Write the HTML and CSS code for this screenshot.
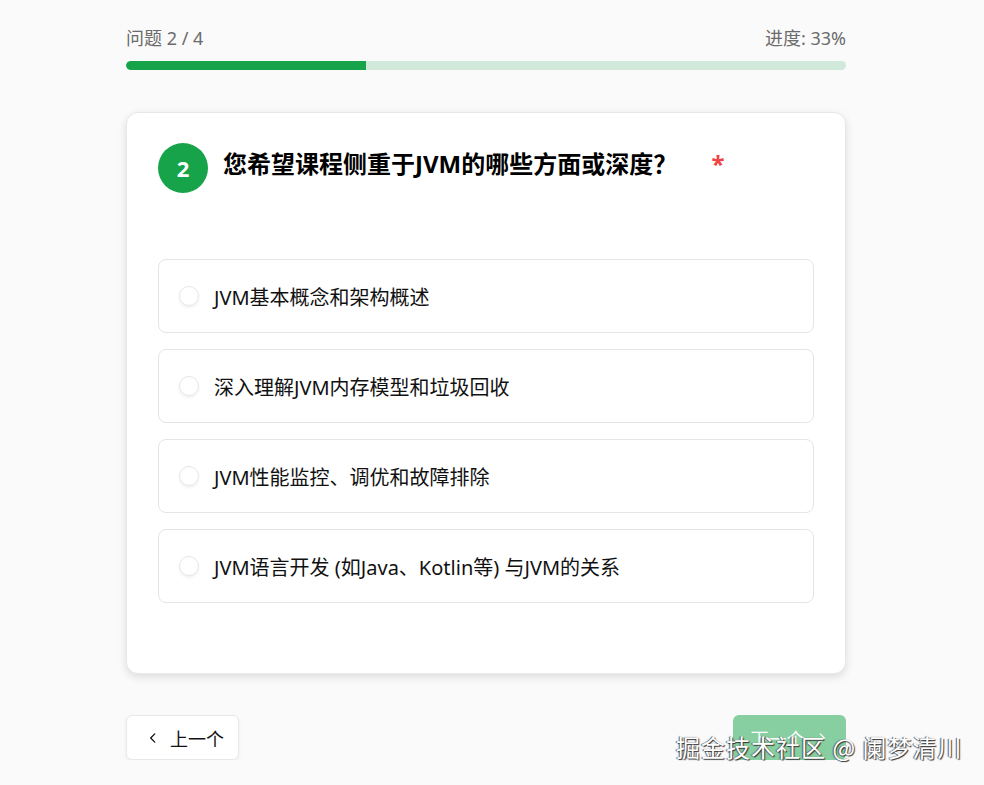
FILE: index.html
```html
<!DOCTYPE html>
<html lang="zh-CN">
<head>
    <meta charset="UTF-8">
    <meta name="viewport" content="width=device-width, initial-scale=1.0">
    <title>JVM 课程调查</title>
    <link rel="stylesheet" href="styles.css">
</head>
<body>
    <div class="survey">
        <div class="progress-head">
            <span>问题 2 / 4</span>
            <span>进度: 33%</span>
        </div>
        <div class="progress-track">
            <div class="progress-fill" style="width: 33.3%"></div>
        </div>

        <div class="card">
            <div class="question">
                <div class="q-num">2</div>
                <h2 class="q-title">您希望课程侧重于JVM的哪些方面或深度？ <span class="required">*</span></h2>
            </div>
            <div class="options">
                <label class="option"><span class="radio"></span>JVM基本概念和架构概述</label>
                <label class="option"><span class="radio"></span>深入理解JVM内存模型和垃圾回收</label>
                <label class="option"><span class="radio"></span>JVM性能监控、调优和故障排除</label>
                <label class="option"><span class="radio"></span>JVM语言开发 (如Java、Kotlin等) 与JVM的关系</label>
            </div>
        </div>

        <div class="nav">
            <button class="btn btn-prev">
                <svg width="14" height="14" viewBox="0 0 24 24" fill="none" stroke="currentColor" stroke-width="2.2" stroke-linecap="round" stroke-linejoin="round"><path d="M15 5l-7 7 7 7"/></svg>
                上一个
            </button>
            <button class="btn btn-next" disabled>
                下一个
                <svg width="14" height="14" viewBox="0 0 24 24" fill="none" stroke="currentColor" stroke-width="2.2" stroke-linecap="round" stroke-linejoin="round"><path d="M9 5l7 7-7 7"/></svg>
            </button>
        </div>
    </div>
    <div class="watermark">掘金技术社区 @ 阑梦清川</div>
</body>
</html>
```

FILE: styles.css
```css
body {
    margin: 0;
    padding-right: 12px;
    background: #fafafa;
    font-family: "Noto Sans", "Noto Sans CJK SC", sans-serif;
    color: #111;
}
.survey {
    width: 720px;
    margin: 0 auto;
    padding-top: 26px;
}
.progress-head {
    display: flex;
    justify-content: space-between;
    font-size: 18px;
    line-height: 24px;
    color: #6b6b6b;
}
.progress-track {
    height: 9px;
    margin-top: 11px;
    border-radius: 5px;
    background: #d1e9da;
    overflow: hidden;
}
.progress-fill {
    height: 100%;
    background: #16a34a;
    border-radius: 5px 0 0 5px;
}
.card {
    margin-top: 42px;
    background: #fff;
    border: 1px solid #e8e8e8;
    border-radius: 12px;
    box-shadow: 0 3px 8px rgba(0, 0, 0, 0.12);
    padding: 30px 31px 70px;
}
.question {
    display: flex;
    align-items: flex-start;
    gap: 15px;
    margin-bottom: 66px;
}
.q-num {
    width: 50px;
    height: 50px;
    flex: none;
    border-radius: 50%;
    background: #16a34a;
    color: #fff;
    font-size: 22px;
    font-weight: 700;
    display: flex;
    justify-content: center;
    align-items: center;
}
.q-title {
    margin: 4px 0 0;
    font-size: 24px;
    line-height: 34px;
    font-weight: 700;
    color: #000;
}
.required {
    color: #ef4444;
    margin-left: 28px;
}
.options {
    display: flex;
    flex-direction: column;
    gap: 16px;
}
.option {
    display: flex;
    align-items: center;
    height: 72px;
    padding: 0 20px;
    border: 1px solid #e5e5e5;
    border-radius: 8px;
    font-size: 20px;
    color: #111;
    cursor: pointer;
}
.radio {
    width: 18px;
    height: 18px;
    flex: none;
    border: 1px solid #e6e6e6;
    border-radius: 50%;
    box-shadow: 0 2px 3px rgba(0, 0, 0, 0.06);
    margin-right: 15px;
}
.nav {
    display: flex;
    justify-content: space-between;
    margin-top: 41px;
}
.btn {
    display: flex;
    align-items: center;
    gap: 10px;
    height: 45px;
    padding: 0 14px 0 19px;
    border-radius: 6px;
    font-family: inherit;
    font-size: 18px;
    cursor: pointer;
}
.btn-prev {
    background: #fff;
    color: #111;
    border: 1px solid #e8e8e8;
    box-shadow: 0 2px 4px rgba(0, 0, 0, 0.05);
}
.btn-next {
    width: 113px;
    justify-content: center;
    padding: 0;
    background: #16a34a;
    color: #fff;
    border: none;
    opacity: 0.5;
    cursor: not-allowed;
}
.watermark {
    position: absolute;
    left: 676px;
    top: 729px;
    font-size: 24px;
    letter-spacing: 1px;
    color: #fff;
    font-family: "Noto Sans CJK SC", sans-serif;
    text-shadow: 1px 1px 1px #333, -1px 0 1px #555;
}
```
